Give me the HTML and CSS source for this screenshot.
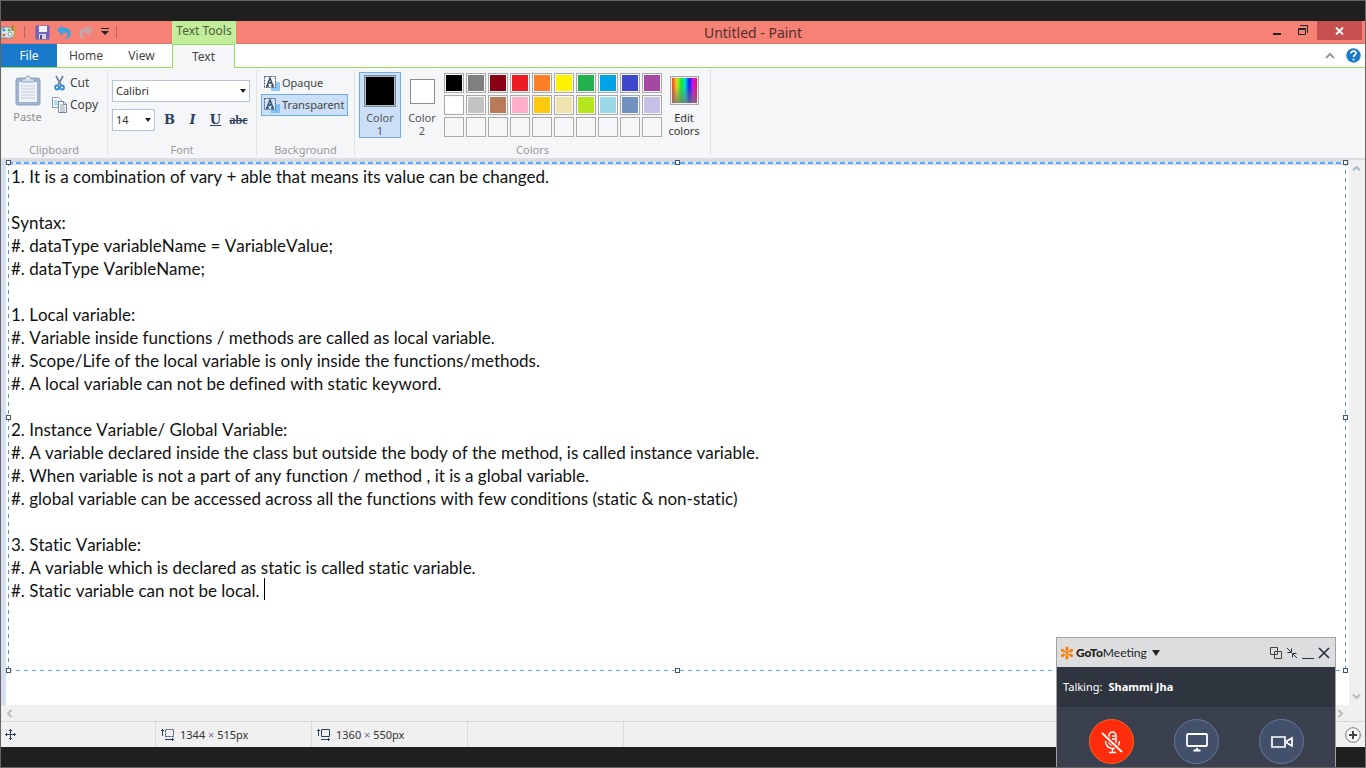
FILE: index.html
```html
<!DOCTYPE html>
<html lang="en">
<head>
<meta charset="utf-8">
<title>Untitled - Paint</title>
<link rel="stylesheet" href="styles.css">
</head>
<body>
<div class="screen">
  <main class="window">
    <header class="titlebar">
      <div class="quick">
        <svg class="app-icon" width="16" height="18" viewBox="0 0 16 18"><path d="M0 6C3 3 11 3 13 8c2 5-2 8-7 7H0z" fill="#dcecf2" stroke="#668a9c"/><circle cx="3" cy="7" r="1.600" fill="#3f8fd0"/><circle cx="8" cy="7" r="1.600" fill="#70b23c"/><circle cx="3" cy="12" r="1.600" fill="#dc6a32"/><circle cx="9" cy="11" r="2" fill="#fff" stroke="#7b99a6"/><path d="M12 2l-1 6" stroke="#a97520" stroke-width="1.500"/><path d="M15 2l-2 13" stroke="#d89b2e" stroke-width="1.800"/></svg>
        <span class="tick"></span>
        <button class="icon-btn" aria-label="Save"><svg width="15" height="15" viewBox="0 0 15 15"><path d="M1 1h13v13H1z" fill="#7467c4" stroke="#6a5db4"/><path d="M4 1h8v6H4z" fill="#f1f3fb"/><path d="M4 9h7v5H4z" fill="#d7d6e4"/><path d="M5 10h2v4H5z" fill="#4a4380"/></svg></button>
        <button class="icon-btn" aria-label="Undo"><svg width="15" height="15" viewBox="0 0 15 15"><path d="M0 5l5.500-5v3c6-1 9 3 8 7-1 3-3 4-6 5 2-2 3-3 3-5 0-2-2-2.500-5-2v3z" fill="#3ea0dc"/></svg></button>
        <button class="icon-btn" aria-label="Redo"><svg width="15" height="15" viewBox="0 0 15 15"><path d="M14 5L8.500 0v3c-6-1-9 3-8 7 1 3 3 4 6 5-2-2-3-3-3-5 0-2 2-2.500 5-2v3z" fill="#c9a3a8"/></svg></button>
        <button class="icon-btn" aria-label="Customize"><svg width="8" height="8" viewBox="0 0 8 8"><path d="M0 .5h8" stroke="#222"/><path d="M0 3h8L4 7z" fill="#222"/></svg></button>
        <span class="tick"></span>
      </div>
      <div class="context-label">Text Tools</div>
      <h1 class="title">Untitled - Paint</h1>
      <div class="controls">
        <button class="icon-btn" aria-label="Minimize"><svg width="8" height="16" viewBox="0 0 8 16"><path d="M0 11h8" stroke="#222" stroke-width="2"/></svg></button>
        <button class="icon-btn" aria-label="Restore"><svg width="10" height="11" viewBox="0 0 10 11"><path d="M.5 3.500h7v6h-7zM0 4.500h8" fill="none" stroke="#222"/><path d="M2 .5h7.500V8" fill="none" stroke="#222"/></svg></button>
        <button class="close" aria-label="Close"><svg width="9" height="8" viewBox="0 0 9 8"><path d="M1 .5l7 7M8 .5l-7 7" stroke="#fff" stroke-width="1.800"/></svg></button>
      </div>
    </header>

    <nav class="tabs">
      <button class="tab file">File</button>
      <button class="tab home">Home</button>
      <button class="tab view">View</button>
      <button class="tab active">Text</button>
      <div class="tabs-end">
        <button class="icon-btn" aria-label="Collapse ribbon"><svg width="10" height="8" viewBox="0 0 10 8"><path d="M1 6l4-4 4 4" fill="none" stroke="#999" stroke-width="2"/></svg></button>
        <button class="icon-btn" aria-label="Help"><svg width="15" height="15" viewBox="0 0 15 15"><circle cx="7.500" cy="7.500" r="7.200" fill="#1979ca"/><path d="M5 5.500C5 2.300 10 2.300 10 5c0 2-2.500 2-2.500 4" fill="none" stroke="#fff" stroke-width="1.700"/><circle cx="7.500" cy="11.500" r="1.100" fill="#fff"/></svg></button>
      </div>
    </nav>

    <section class="ribbon">
      <div class="group clipboard">
        <div class="group-body">
          <button class="paste"><svg width="26" height="31" viewBox="0 0 26 31"><rect x="1" y="3" width="24" height="27" rx="2" fill="#9fb3cf" stroke="#8fa3c0"/><path d="M4 7h18v20H4z" fill="#eef2f8"/><path d="M6 11h14M6 14h14M6 17h14M6 20h14M6 23h14" stroke="#c5cfdd"/><path d="M7 7V4h3c0-4 6-4 6 0h3v3z" fill="#d9e0ea" stroke="#94a5be"/></svg><span>Paste</span></button>
          <div class="stack">
            <button class="cmd"><svg width="16" height="16" viewBox="0 0 16 16"><path d="M4 1l5 9M11 1l-5 9" stroke="#6f8199" stroke-width="1.700"/><circle cx="5" cy="12.500" r="2" fill="none" stroke="#2f8dcc" stroke-width="1.800"/><circle cx="10" cy="12.500" r="2" fill="none" stroke="#2f8dcc" stroke-width="1.800"/></svg>Cut</button>
            <button class="cmd"><svg width="16" height="16" viewBox="0 0 16 16"><path d="M.5 .5h6l3 3v7h-9z" fill="#fff" stroke="#8999ae"/><path d="M2 4h5M2 6h5M2 8h5" stroke="#6fb5e5"/><path d="M6.500 4.500h5l3 3v8h-8z" fill="#fff" stroke="#77879b"/><path d="M8 8h4M8 10h5M8 12h5M8 14h5" stroke="#8e9dac"/><path d="M11.500 4.500v3h3" fill="none" stroke="#77879b"/></svg>Copy</button>
          </div>
        </div>
        <div class="group-name">Clipboard</div>
      </div>

      <div class="group font">
        <div class="group-body column">
          <select class="combo family" aria-label="Font family"><option>Calibri</option></select>
          <div class="format">
            <select class="combo size" aria-label="Font size"><option>14</option></select>
            <button class="style" aria-label="Bold"><b>B</b></button>
            <button class="style" aria-label="Italic"><i>I</i></button>
            <button class="style" aria-label="Underline"><u>U</u></button>
            <button class="style strike" aria-label="Strikethrough"><s>abc</s></button>
          </div>
        </div>
        <div class="group-name">Font</div>
      </div>

      <div class="group background">
        <div class="group-body column">
          <button class="mode"><svg width="17" height="16" viewBox="0 0 17 16"><path d="M8 7h9v9H8z" fill="#8cc8fa"/><path d="M1.500 1.500h11v11h-11z" fill="#f8fbff" stroke="#49617f" stroke-dasharray="2 1"/><path d="M4 11l3-8 3 8M5 8h4M3 11h3M8 11h3" fill="none" stroke="#34495f" stroke-width="1.400"/></svg>Opaque</button>
          <button class="mode on"><svg width="17" height="16" viewBox="0 0 17 16"><path d="M8 7h9v9H8z" fill="#7fbdf5"/><path d="M1.500 1.500h11v11h-11z" fill="#cbe3f8" stroke="#49617f" stroke-dasharray="2 1"/><path d="M4 11l3-8 3 8M5 8h4M3 11h3M8 11h3" fill="none" stroke="#34495f" stroke-width="1.400"/></svg>Transparent</button>
        </div>
        <div class="group-name">Background</div>
      </div>

      <div class="group colors">
        <div class="group-body">
          <button class="slot on"><span class="chip large"></span><span>Color<br>1</span></button>
          <button class="slot"><span class="chip"></span><span>Color<br>2</span></button>
          <div class="palette">
            <button class="cell c-black" aria-label="Black"></button><button class="cell c-gray" aria-label="Gray"></button><button class="cell c-darkred" aria-label="Dark red"></button><button class="cell c-red" aria-label="Red"></button><button class="cell c-orange" aria-label="Orange"></button><button class="cell c-yellow" aria-label="Yellow"></button><button class="cell c-green" aria-label="Green"></button><button class="cell c-turquoise" aria-label="Turquoise"></button><button class="cell c-indigo" aria-label="Indigo"></button><button class="cell c-purple" aria-label="Purple"></button>
            <button class="cell c-white" aria-label="White"></button><button class="cell c-lightgray" aria-label="Light gray"></button><button class="cell c-brown" aria-label="Brown"></button><button class="cell c-rose" aria-label="Rose"></button><button class="cell c-gold" aria-label="Gold"></button><button class="cell c-cream" aria-label="Light yellow"></button><button class="cell c-lime" aria-label="Lime"></button><button class="cell c-aqua" aria-label="Light turquoise"></button><button class="cell c-bluegray" aria-label="Blue gray"></button><button class="cell c-lavender" aria-label="Lavender"></button>
            <button class="cell" aria-label="Custom 1"></button><button class="cell" aria-label="Custom 2"></button><button class="cell" aria-label="Custom 3"></button><button class="cell" aria-label="Custom 4"></button><button class="cell" aria-label="Custom 5"></button><button class="cell" aria-label="Custom 6"></button><button class="cell" aria-label="Custom 7"></button><button class="cell" aria-label="Custom 8"></button><button class="cell" aria-label="Custom 9"></button><button class="cell" aria-label="Custom 10"></button>
          </div>
          <button class="edit"><span class="spectrum"></span><span>Edit<br>colors</span></button>
        </div>
        <div class="group-name">Colors</div>
      </div>
    </section>

    <section class="workspace">
      <div class="canvas">
        <div class="textbox">
          <textarea class="note" aria-label="Canvas text" spellcheck="false">1. It is a combination of vary + able that means its value can be changed.

Syntax:
#. dataType variableName = VariableValue;
#. dataType VaribleName;

1. Local variable:
#. Variable inside functions / methods are called as local variable.
#. Scope/Life of the local variable is only inside the functions/methods.
#. A local variable can not be defined with static keyword.

2. Instance Variable/ Global Variable:
#. A variable declared inside the class but outside the body of the method, is called instance variable.
#. When variable is not a part of any function / method , it is a global variable.
#. global variable can be accessed across all the functions with few conditions (static &amp; non-static)

3. Static Variable:
#. A variable which is declared as static is called static variable.
#. Static variable can not be local.</textarea>
          <span class="caret"></span>
          <span class="handle top left"></span><span class="handle top center"></span><span class="handle top right"></span>
          <span class="handle middle left"></span><span class="handle middle right"></span>
          <span class="handle bottom left"></span><span class="handle bottom center"></span><span class="handle bottom right"></span>
        </div>
      </div>
      <div class="vscroll">
        <svg width="9" height="7" viewBox="0 0 9 7"><path d="M1 5.500l3.500-3.500L8 5.500" fill="none" stroke="#a9bccb" stroke-width="2"/></svg>
        <svg width="9" height="7" viewBox="0 0 9 7"><path d="M1 1.500L4.500 5 8 1.500" fill="none" stroke="#bbb" stroke-width="2"/></svg>
      </div>
    </section>
    <div class="hscroll">
      <svg width="7" height="9" viewBox="0 0 7 9"><path d="M5.500 1L2 4.500 5.500 8" fill="none" stroke="#bbb" stroke-width="2"/></svg>
      <svg width="7" height="9" viewBox="0 0 7 9"><path d="M1.500 1L5 4.500 1.500 8" fill="none" stroke="#bbb" stroke-width="2"/></svg>
    </div>
    <footer class="status">
      <div class="status-cell"><svg width="11" height="11" viewBox="0 0 11 11"><path d="M5.500 0v11M0 5.500h11M4 1.500h3M4 9.500h3M1.500 4v3M9.500 4v3" stroke="#29405f"/></svg></div>
      <div class="status-cell"><svg width="14" height="13" viewBox="0 0 14 13"><path d="M4.500 1.500h8v7h-8z" fill="none" stroke="#29405f" stroke-dasharray="2 1"/><path d="M1.500 1v7M0 2.500h3M4 11.500h9M11.500 10v3" stroke="#29405f"/></svg>1344 <span class="times">×</span> 515px</div>
      <div class="status-cell"><svg width="14" height="13" viewBox="0 0 14 13"><path d="M4.500 1.500h8v7h-8z" fill="none" stroke="#29405f"/><path d="M1.500 1v7M0 2.500h3M4 11.500h9M11.500 10v3" stroke="#29405f"/></svg>1360 <span class="times">×</span> 550px</div>
      <div class="status-cell"></div>
      <button class="icon-btn zoom-in" aria-label="Zoom in"><svg width="16" height="16" viewBox="0 0 16 16"><circle cx="8" cy="8" r="7.300" fill="#fafafa" stroke="#777"/><path d="M8 4v8M4 8h8" stroke="#444" stroke-width="2"/></svg></button>
    </footer>
  </main>

  <aside class="meeting">
    <header class="meeting-bar">
      <svg class="flower" width="14" height="14" viewBox="0 0 14 14"><g stroke="#ff7a00" stroke-linecap="round" stroke-width="2.800"><path d="M7 1.800v1.400M7 10.800v1.400M2.300 4.300l1.300.8M10.400 8.900l1.300.8M2.300 9.700l1.300-.8M10.400 5.100l1.300-.8"/><path d="M7 3v8M3.500 5l7 4M3.500 9l7-4" stroke-width="1.400"/></g></svg>
      <div class="brand"><b>GoTo</b>Meeting</div>
      <svg class="drop" width="8" height="6" viewBox="0 0 8 6"><path d="M0 0h8L4 6z" fill="#222"/></svg>
      <div class="meeting-controls">
        <button class="icon-btn" aria-label="Detach"><svg width="12" height="12" viewBox="0 0 12 12"><path d="M.5 .5h7v7h-7zM4.500 4.500h7v7h-7z" fill="none" stroke="#444"/></svg></button>
        <button class="icon-btn" aria-label="Shrink"><svg width="12" height="12" viewBox="0 0 12 12"><path d="M1 1l4 4M1.500 5.500h4v-4M11 11L7 7M10.500 6.500h-4v4" fill="none" stroke="#2a3142"/></svg></button>
        <button class="icon-btn" aria-label="Minimize meeting"><svg width="12" height="12" viewBox="0 0 12 12"><path d="M0 11.500h12" stroke="#2a3142"/></svg></button>
        <button class="icon-btn" aria-label="Close meeting"><svg width="12" height="12" viewBox="0 0 12 12"><path d="M1 1l10 10M11 1L1 11" stroke="#2a3142" stroke-width="1.700"/></svg></button>
      </div>
    </header>
    <div class="talking">Talking: <b>Shammi Jha</b></div>
    <div class="calls">
      <button class="call mute" aria-label="Unmute"><svg width="26" height="26" viewBox="0 0 26 26"><g fill="none" stroke="#fff" stroke-width="1.500"><rect x="10" y="3" width="7" height="13" rx="3.500"/><path d="M6.500 12c0 10 14 10 14 0M13.500 19v4M10 23.500h7M13 7h3M13 10h3"/></g><path d="M3 4l20 19" stroke="#ff2d0b" stroke-width="4"/><path d="M3 4l20 19" stroke="#fff" stroke-width="1.800"/></svg></button>
      <button class="call" aria-label="Share screen"><svg width="26" height="26" viewBox="0 0 26 26"><rect x="3" y="5" width="20" height="12" rx="1" fill="none" stroke="#fff" stroke-width="1.800"/><path d="M13 19v3M9.500 21.500h7" stroke="#fff" stroke-width="2"/></svg></button>
      <button class="call" aria-label="Camera"><svg width="26" height="26" viewBox="0 0 26 26"><path d="M3 8h13v10H3zM18 12l5-3v8l-5-3z" fill="none" stroke="#fff" stroke-width="1.700"/></svg></button>
    </div>
  </aside>
</div>
</body>
</html>
```
FILE: styles.css
```css
* { box-sizing: border-box; }

body {
  margin: 0;
  background: #202020;
  color: #333;
  font: 12px/16px "Noto Sans", "Open Sans", sans-serif;
}

button {
  margin: 0;
  padding: 0;
  border: 0;
  background: none;
  color: inherit;
  font: inherit;
}

svg { display: block; flex: none; }

.screen {
  position: relative;
  height: 100vh;
  padding: 20px 0;
  border: 1px solid #646464;
  overflow: hidden;
}

.window {
  display: flex;
  flex-direction: column;
  height: 100%;
  background: #f0f0f0;
}

.icon-btn { display: flex; align-items: center; justify-content: center; }

/* Title bar */
.titlebar {
  display: flex;
  flex: none;
  height: 23px;
  background: #f68175;
  border-bottom: 1px solid #d9776e;
}
.quick { display: flex; align-items: center; width: 171px; gap: 7px; }
.tick { width: 1px; height: 12px; margin: 0 3px 0 0; background: #b75f59; }
.context-label {
  width: 64px;
  height: 23px;
  padding-top: 2px;
  background: #c2ee9a;
  color: #4b5d3d;
  text-align: center;
}
.title {
  flex: 1;
  margin: 0;
  padding-left: 6px;
  color: #542f2d;
  font-size: 14px;
  font-weight: 400;
  line-height: 24px;
  text-align: center;
}
.controls { display: flex; align-items: flex-start; }
.controls .icon-btn { width: 26px; height: 19px; }
.controls .close {
  display: flex;
  align-items: center;
  justify-content: center;
  width: 45px;
  height: 19px;
  margin: 0 3px 0 1px;
  background: #c75050;
}

/* Ribbon tabs */
.tabs {
  display: flex;
  flex: none;
  height: 24px;
  background: #fff;
  box-shadow: inset 0 -1px #92e060;
}
.tab { color: #444; }
.file { width: 56px; height: 23px; background: #1979ca; color: #fff; }
.home { width: 58px; }
.view { width: 53px; }
.tab.active {
  width: 63px;
  margin-left: 4px;
  border: 1px solid #92e060;
  border-bottom: 0;
  background: #f5f6f7;
}
.tabs-end { display: flex; gap: 11px; margin-left: auto; padding: 0 4px 1px 0; }

/* Ribbon */
.ribbon {
  display: flex;
  flex: none;
  height: 92px;
  padding: 2px 0 1px;
  background: #f5f6f7;
  border-bottom: 2px solid #dcdde0;
}
.group {
  display: flex;
  flex-direction: column;
  border-right: 1px solid #e2e3e4;
}
.group-body { display: flex; flex: 1; }
.group-body.column { flex-direction: column; }
.group-name {
  color: #999;
  font-size: 11px;
  line-height: 14px;
  text-align: center;
}

.clipboard { width: 107px; }
.paste {
  display: flex;
  flex-direction: column;
  align-items: center;
  gap: 3px;
  width: 53px;
  padding-top: 5px;
  color: #8c8c8c;
  font-size: 11px;
}
.stack { display: flex; flex-direction: column; gap: 6px; padding-top: 5px; }
.cmd {
  display: flex;
  align-items: center;
  gap: 2px;
  height: 16px;
  margin-left: -2px;
  color: #444;
}

.font { width: 149px; }
.font .group-body { gap: 7px; padding: 10px 4px 0; }
.combo {
  appearance: none;
  height: 22px;
  padding: 0 3px;
  border: 1px solid #b4c4dc;
  border-radius: 0;
  color: #333;
  font: 11px/16px "Noto Sans", "Open Sans", sans-serif;
  background: url("data:image/svg+xml,%3Csvg xmlns='http://www.w3.org/2000/svg' width='6' height='4'%3E%3Cpath d='M0 0h6L3 4z' fill='%23222'/%3E%3C/svg%3E") no-repeat right 3px center #fff;
}
.family { width: 138px; }
.format { display: flex; align-items: center; }
.size { width: 43px; margin-right: 3px; }
.style {
  width: 23px;
  color: #2c405c;
  font: 700 13px/20px "DejaVu Serif", "Liberation Serif", serif;
}
.strike { font: 700 12px/20px "Liberation Serif", serif; }

.background { width: 98px; }
.background .group-body { padding: 2px 6px 0 4px; }
.mode {
  display: flex;
  align-items: center;
  gap: 2px;
  height: 22px;
  padding-left: 1px;
  border: 1px solid transparent;
  color: #444;
  font-size: 11px;
}
.mode.on { border-color: #70ace8; background: #cbe0f6; }

.colors { width: 356px; }
.colors .group-body { padding: 2px 4px 0; }
.slot {
  display: flex;
  flex-direction: column;
  align-items: center;
  justify-content: flex-end;
  width: 42px;
  height: 66px;
  border: 1px solid transparent;
  color: #555;
  font-size: 11px;
  line-height: 13px;
}
.slot.on { border-color: #70ace8; background: #cbe0f6; }
.chip {
  width: 25px;
  height: 25px;
  margin-bottom: 7px;
  border: 1px solid #8c8c8c;
  background: #fff;
}
.chip.large {
  width: 32px;
  height: 32px;
  margin-bottom: 4px;
  border: 1px solid #7b8a99;
  box-shadow: inset 0 0 0 1px #a9b8c8;
  background: #000;
}
.palette {
  display: grid;
  grid-template-columns: repeat(10, 20px);
  grid-auto-rows: 20px;
  gap: 2px;
  margin: 1px 5px 0 1px;
}
.cell { border: 1px solid #aaa; box-shadow: inset 0 0 0 1px #f8f8f8; }
.c-black { background: #000; }
.c-gray { background: #7f7f7f; }
.c-darkred { background: #880015; }
.c-red { background: #ed1c24; }
.c-orange { background: #ff7f27; }
.c-yellow { background: #fff200; }
.c-green { background: #22b14c; }
.c-turquoise { background: #00a2e8; }
.c-indigo { background: #3f48cc; }
.c-purple { background: #a349a4; }
.c-white { background: #fff; }
.c-lightgray { background: #c3c3c3; }
.c-brown { background: #b97a57; }
.c-rose { background: #ffaec9; }
.c-gold { background: #ffc90e; }
.c-cream { background: #efe4b0; }
.c-lime { background: #b5e61d; }
.c-aqua { background: #99d9ea; }
.c-bluegray { background: #7092be; }
.c-lavender { background: #c8bfe7; }
.edit {
  display: flex;
  flex-direction: column;
  align-items: center;
  width: 34px;
  padding-top: 4px;
  font-size: 11px;
  line-height: 13px;
}
.spectrum {
  width: 29px;
  height: 29px;
  margin-bottom: 6px;
  border: 1px solid #b4a0ac;
  outline: 1px solid #eee;
  outline-offset: -2px;
  background:
    linear-gradient(transparent 30%, #777c),
    linear-gradient(90deg, #e22, #dd2 22%, #1e2 38%, #0dd 52%, #12e 68%, #d1e 82%, #e12);
}

/* Drawing area */
.workspace {
  display: flex;
  flex: 1;
  min-height: 0;
  background: #d5dfef;
}
.canvas {
  display: flex;
  flex: 1;
  margin-left: 5px;
  padding: 2px 3px 34px 2px;
  background: linear-gradient(#d5dae6 5px, #fff 5px);
}
.textbox {
  position: relative;
  display: flex;
  flex: 1;
  padding: 3px;
  background:
    repeating-linear-gradient(90deg, #61a8f5 0 5px, #e8f0fa 5px 8px) top / 100% 2px no-repeat,
    repeating-linear-gradient(90deg, #61a8f5 0 4px, transparent 4px 8px) bottom / 100% 1px no-repeat,
    repeating-linear-gradient(#6590bd 0 4px, transparent 4px 8px) left / 1px 100% no-repeat,
    repeating-linear-gradient(#6590bd 0 4px, transparent 4px 8px) right / 1px 100% no-repeat;
}
.note {
  flex: 1;
  padding: 0;
  border: 0;
  outline: 0;
  resize: none;
  overflow: hidden;
  background: none;
  color: #111;
  font: 17px/23px Lato, sans-serif;
  font-kerning: none;
  font-variant-ligatures: none;
}
.caret {
  position: absolute;
  top: 416px;
  left: 256px;
  width: 1px;
  height: 22px;
  background: #000;
}
.handle {
  position: absolute;
  width: 5px;
  height: 5px;
  border: 1px solid #44546a;
  background: #fff;
}
.handle.top { top: -2px; }
.handle.middle { top: calc(50% - 2px); }
.handle.bottom { bottom: -2px; }
.handle.left { left: -2px; }
.handle.center { left: calc(50% - 2px); }
.handle.right { right: -2px; }

.vscroll {
  display: flex;
  flex-direction: column;
  align-items: center;
  justify-content: space-between;
  width: 16px;
  padding: 5px 1px 5px 0;
  background: #f0f0f0;
}
.hscroll {
  display: flex;
  flex: none;
  align-items: center;
  justify-content: space-between;
  height: 17px;
  padding: 0 21px 0 5px;
  border-bottom: 1px solid #d7d7d7;
}
.status { display: flex; flex: none; height: 25px; }
.status-cell {
  display: flex;
  align-items: center;
  width: 156px;
  padding-left: 5px;
  border-right: 1px solid #dcdcdc;
  font-size: 11px;
  white-space: pre;
}
.status-cell svg { margin-right: 5px; }
.status-cell:first-child { width: 155px; padding-left: 4px; }
.times { color: #85608d; }
.zoom-in { margin: 0 4px 0 auto; }

/* Meeting panel */
.meeting {
  position: absolute;
  right: 29px;
  bottom: -1px;
  width: 280px;
  border: 1px solid #a2a2a2;
  border-bottom: 0;
  background: #3a404d;
}
.meeting-bar {
  display: flex;
  align-items: center;
  height: 29px;
  padding: 0 5px 0 3px;
  background: #dcdddf;
  color: #222;
}
.brand { margin: 0 5px 0 2px; font: 12px/16px Lato, sans-serif; }
.brand b { font-weight: 900; }
.meeting-controls { display: flex; gap: 4px; margin-left: auto; }
.talking {
  display: flex;
  gap: 6px;
  height: 40px;
  padding-left: 6px;
  background: #2f353f;
  color: #fff;
  font-size: 11px;
  line-height: 40px;
}
.calls {
  display: flex;
  justify-content: space-between;
  padding: 12px 31px 4px 32px;
}
.call {
  display: flex;
  align-items: center;
  justify-content: center;
  width: 45px;
  height: 45px;
  border: 1px solid #65799c;
  border-radius: 50%;
  background: #43506c;
}
.call.mute { border-color: #ff6418; background: #ff2d0b; }
```
